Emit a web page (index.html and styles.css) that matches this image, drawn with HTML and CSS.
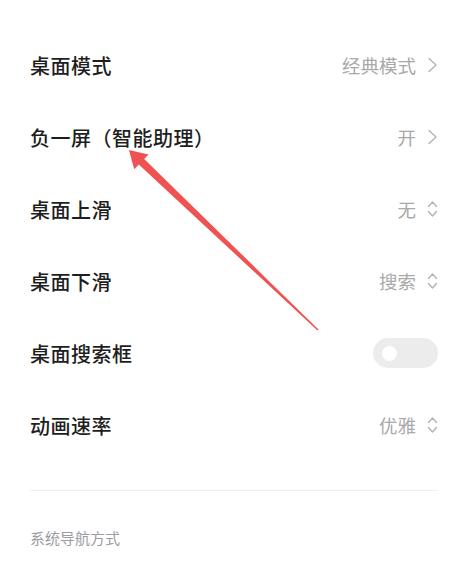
FILE: index.html
```html
<!DOCTYPE html>
<html lang="zh-CN">
<head>
    <meta charset="UTF-8">
    <meta name="viewport" content="width=device-width, initial-scale=1.0">
    <title>桌面设置</title>
    <link rel="stylesheet" href="styles.css">
</head>
<body>
    <div class="page">
        <div class="list">
            <div class="row">
                <span class="label">桌面模式</span>
                <span class="value">经典模式
                    <svg class="icon-next" viewBox="0 0 11 16" width="11" height="16"><path d="M2 1.5 L9 8 L2 14.5" /></svg>
                </span>
            </div>
            <div class="row">
                <span class="label">负一屏（智能助理）</span>
                <span class="value">开
                    <svg class="icon-next" viewBox="0 0 11 16" width="11" height="16"><path d="M2 1.5 L9 8 L2 14.5" /></svg>
                </span>
            </div>
            <div class="row">
                <span class="label">桌面上滑</span>
                <span class="value">无
                    <svg class="icon-select" viewBox="0 0 11 20" width="11" height="20"><path d="M1.5 7.5 L5.5 3 L9.5 7.5 M1.5 12.5 L5.5 17 L9.5 12.5" /></svg>
                </span>
            </div>
            <div class="row">
                <span class="label">桌面下滑</span>
                <span class="value">搜索
                    <svg class="icon-select" viewBox="0 0 11 20" width="11" height="20"><path d="M1.5 7.5 L5.5 3 L9.5 7.5 M1.5 12.5 L5.5 17 L9.5 12.5" /></svg>
                </span>
            </div>
            <div class="row">
                <span class="label">桌面搜索框</span>
                <span class="switch"><span class="knob"></span></span>
            </div>
            <div class="row">
                <span class="label">动画速率</span>
                <span class="value">优雅
                    <svg class="icon-select" viewBox="0 0 11 20" width="11" height="20"><path d="M1.5 7.5 L5.5 3 L9.5 7.5 M1.5 12.5 L5.5 17 L9.5 12.5" /></svg>
                </span>
            </div>
        </div>

        <div class="divider"></div>

        <div class="section-title">系统导航方式</div>

        <!-- annotation arrow drawn over the list -->
        <svg class="arrow" viewBox="0 0 468 572" width="468" height="572">
            <polygon points="129,150 148.5,154.5 144.2,159 318.5,329.5 317.5,330.5 138.8,164.6 134.2,169.2" />
        </svg>
    </div>
</body>
</html>
```

FILE: styles.css
```css
body {
    margin: 0;
    background: #ffffff;
    font-family: "Noto Sans CJK SC", "Noto Sans", sans-serif;
}
.page {
    position: relative;
    width: 468px;
    height: 572px;
    overflow: hidden;
    padding: 29px 30px 0 30px;
    box-sizing: border-box;
}
.list {
    display: flex;
    flex-direction: column;
}
.row {
    height: 72px;
    display: flex;
    align-items: center;
    justify-content: space-between;
}
.label {
    font-size: 20px;
    font-weight: 500;
    color: #1e1e1e;
    letter-spacing: 0.5px;
}
.value {
    display: flex;
    align-items: center;
    gap: 11px;
    font-size: 18.5px;
    color: #a9a9a9;
}
.value svg {
    fill: none;
    stroke: #b3b3b3;
    stroke-width: 1.4;
    stroke-linecap: round;
    stroke-linejoin: round;
}
.switch {
    width: 65px;
    height: 30px;
    border-radius: 15px;
    background: #ececec;
    display: flex;
    align-items: center;
    padding-left: 9px;
    box-sizing: border-box;
}
.knob {
    width: 15px;
    height: 15px;
    border-radius: 50%;
    background: #ffffff;
}
.divider {
    height: 1px;
    background: #efefef;
    margin-top: 29px;
}
.section-title {
    margin-top: 36px;
    font-size: 15px;
    color: #9c9ca4;
}
.arrow {
    position: absolute;
    left: 0;
    top: 0;
    fill: #f05252;
}
```
